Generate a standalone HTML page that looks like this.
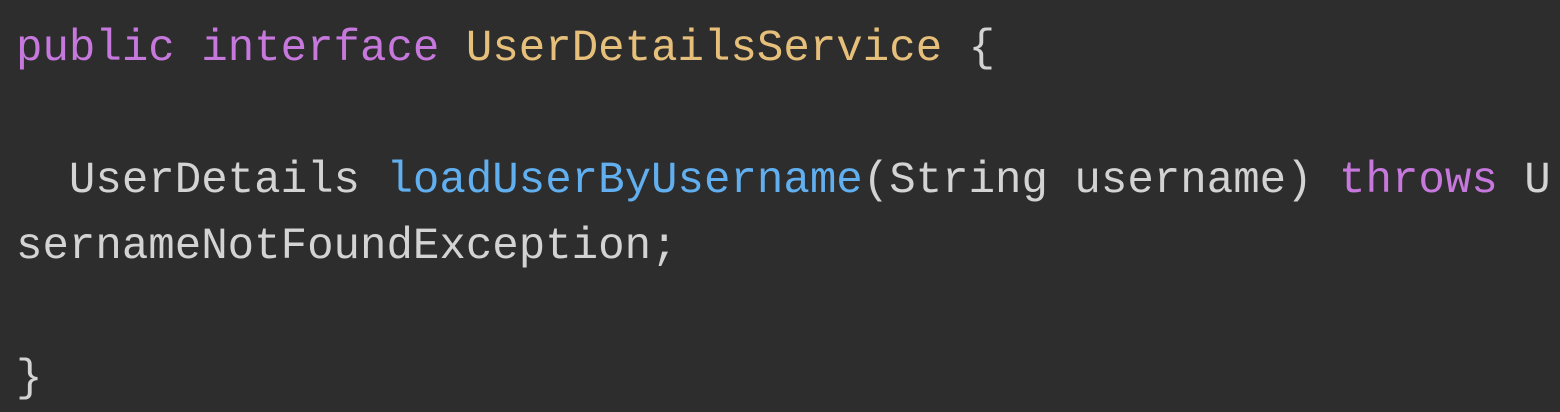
<!DOCTYPE html>
<html><head><meta charset="utf-8"><style>
html,body{margin:0;padding:0;background:#2d2d2d;width:1560px;height:408px;overflow:hidden}
pre{margin:0;position:absolute;left:16px;top:16px;font-family:"Liberation Mono",monospace;font-size:44.1px;line-height:66px;color:#d3d3d3;white-space:pre}
.k{color:#c678dd}.t{color:#e6c07b}.f{color:#61afef}
</style></head><body>
<pre><span class="k">public</span> <span class="k">interface</span> <span class="t">UserDetailsService</span> {

  UserDetails <span class="f">loadUserByUsername</span>(String username) <span class="k">throws</span> U
sernameNotFoundException;

}</pre>
</body></html>
